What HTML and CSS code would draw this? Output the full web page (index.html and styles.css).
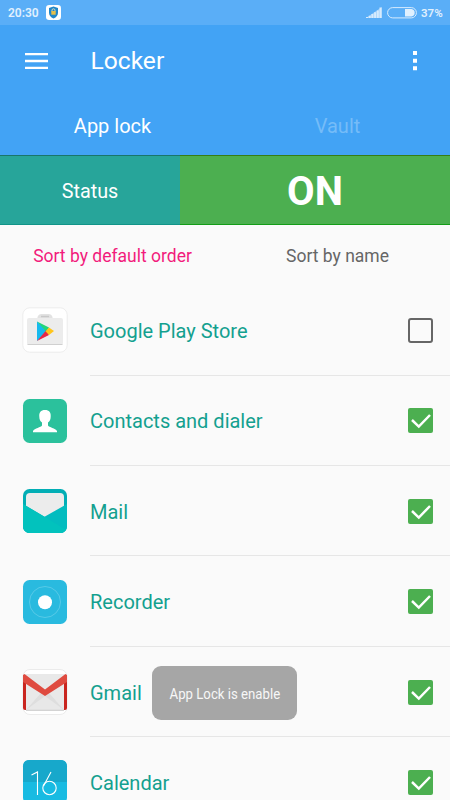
FILE: index.html
```html
<!DOCTYPE html>
<html lang="en">
<head>
<meta charset="utf-8">
<title>Locker</title>
<link rel="stylesheet" href="styles.css">
</head>
<body>
<div class="screen">
  <div class="statusbar">
    <span class="time">20:30</span>
    <svg class="shield" viewBox="0 0 15 15"><rect width="15" height="15" rx="3.2" fill="#fff"/><path d="M7.500 1.500 12 3v4.500q0 4-4.500 6-4.500-2-4.500-6V3z" fill="#1f86c9"/><path d="M6 6.500V5.300a1.500 1.500 0 0 1 3 0v1.200" fill="none" stroke="#e9dfb0"/><rect x="5.300" y="6" width="4.400" height="3.700" fill="#e6c04a"/></svg>
    <svg class="signal" viewBox="0 0 17 12"><path d="M0 11h2v-1H0zM2.700 11h2V8.700h-2zM5.400 11h2V7h-2zM8.100 11h2V5.200h-2zM10.800 11h2V3.500h-2zM13.500 11h2V0.500h-2z" fill="#d7ebfd"/><path d="M0 11 16 0v11z" fill="#d7ebfd" opacity=".55"/></svg>
    <svg class="battery" viewBox="0 0 30 12"><rect x=".6" y=".6" width="28.800" height="10.300" rx="5.100" fill="none" stroke="#d7ebfd"/><path d="M18 2h6.500a3.800 3.800 0 0 1 0 7.500H18z" fill="#e0f0fe"/></svg>
    <span class="percent">37%</span>
  </div>
  <header class="appbar">
    <svg class="menu" viewBox="0 0 23 16"><path d="M0 1.200h23M0 8h23M0 14.800h23" stroke="#fff" stroke-width="2.300"/></svg>
    <h1 class="title">Locker</h1>
    <svg class="more" viewBox="0 0 4 20"><path d="M0 0h4v4H0zM0 7.700h4v4H0zM0 15.300h4v4H0z" fill="#fff"/></svg>
  </header>
  <nav class="tabs"><span>App lock</span><span class="inactive">Vault</span></nav>
  <section class="lockstate"><div class="label">Status</div><div class="value">ON</div></section>
  <div class="sort"><span class="selected">Sort by default order</span><span>Sort by name</span></div>
  <main class="list">
    <div class="row">
      <svg class="icon" viewBox="0 0 44 44"><rect x="-.2" y="-.2" width="44.400" height="44.400" rx="7" fill="#fff" stroke="#e8e8e8" stroke-width=".8"/><path d="M14.500 11V9q1-3 4-3h7q3 0 4 3v2" fill="#e2e2e2"/><path d="M18 8.500h8" stroke="#c8c8c8" stroke-width="1.400"/><rect x="4" y="10" width="36" height="27" rx="2" fill="#ececec"/><path d="M4.500 36.500h35" stroke="#d0d0d0"/><path d="M14 13.500v19.500L24.500 23z" fill="#16b9ee"/><path d="M14 13.500 26 19.500 23.500 24z" fill="#22d57b"/><path d="M14 33 26 27 23.500 22z" fill="#e72845"/><path d="M26 19.500 31 23 26 27 22.500 23.200z" fill="#ffc51b"/></svg>
      <div class="body"><span class="name">Google Play Store</span><span class="check"></span></div>
    </div>
    <div class="row">
      <svg class="icon" viewBox="0 0 44 44"><rect width="44" height="44" rx="6.500" fill="#2bc19c"/><path d="M22 11c4.300 0 6 2.500 5.700 6.500 0 3-1 4.800-2.700 6v3c1 2 7.500 2.600 9 5.500v1.300H10V32c1.500-2.900 8-3.500 9-5.500v-3c-1.700-1.200-2.700-3-2.700-6C16 13.500 17.700 11 22 11z" fill="#fff"/></svg>
      <div class="body"><span class="name">Contacts and dialer</span><span class="check on"><svg viewBox="0 0 25 25"><path d="m4 12 6.800 6.600L22 7"/></svg></span></div>
    </div>
    <div class="row">
      <svg class="icon" viewBox="0 0 44 44"><defs><clipPath id="mail"><rect width="44" height="44" rx="6.500"/></clipPath></defs><g clip-path="url(#mail)"><path d="M0 0h44v44H0z" fill="#02aeb5"/><rect x="3" y="4" width="38" height="30" rx="4" fill="#ececec"/><path d="M0 15 21.500 27.800 44 15v29H0z" fill="#03bcbf"/><path d="M0 15 21.500 27.800 44 41.500V44H0z" fill="#02c2bd"/></g></svg>
      <div class="body"><span class="name">Mail</span><span class="check on"><svg viewBox="0 0 25 25"><path d="m4 12 6.800 6.600L22 7"/></svg></span></div>
    </div>
    <div class="row">
      <svg class="icon" viewBox="0 0 44 44"><rect width="44" height="44" rx="6.500" fill="#29badf"/><circle cx="22" cy="22" r="15.500" fill="none" stroke="#62cde9" stroke-width=".8"/><circle cx="22" cy="22.300" r="7" fill="#fff"/></svg>
      <div class="body"><span class="name">Recorder</span><span class="check on"><svg viewBox="0 0 25 25"><path d="m4 12 6.800 6.600L22 7"/></svg></span></div>
    </div>
    <div class="row">
      <svg class="icon" viewBox="0 0 44 44"><rect x="0" y="-.5" width="44" height="45" rx="7" fill="#fff" stroke="#e6e6e6" stroke-width=".8"/><path d="M2 4h40v36H2z" fill="#e9e9e9"/><path d="M3 40 18 23l4 3 4-3 15 17z" fill="#dedede"/><path d="M3 40 22 26 41 40z" fill="#e8e8e8"/><path d="M3 40.300h38" stroke="#c9c9c9"/><path d="M0 7h3v33H2q-2 0-2-2zM41 7h3v31q0 2-2 2h-1z" fill="#c9251f"/><path d="M0 5 1.500 4 22 19.500 42.500 4 44 5v7L22 26 0 12z" fill="#df4b40"/></svg>
      <div class="body"><span class="name">Gmail</span><span class="check on"><svg viewBox="0 0 25 25"><path d="m4 12 6.800 6.600L22 7"/></svg></span></div>
    </div>
    <div class="row">
      <svg class="icon" viewBox="0 0 44 44"><rect width="44" height="44" rx="6.500" fill="#18bbe2"/><path d="M0 22V6.500Q0 0 6.500 0h31Q44 0 44 6.500V22z" fill="#17a8cb"/><path d="m8.500 15 6-3v23M28 12 20.500 26" fill="none" stroke="#fff" stroke-width="1.100"/><circle cx="26.500" cy="28" r="6.700" fill="none" stroke="#fff" stroke-width="1.100"/></svg>
      <div class="body"><span class="name">Calendar</span><span class="check on"><svg viewBox="0 0 25 25"><path d="m4 12 6.800 6.600L22 7"/></svg></span></div>
    </div>
  </main>
  <div class="toast"><span>App Lock is enable</span></div>
</div>
</body>
</html>
```
FILE: styles.css
```css
* { box-sizing: border-box; }
body { margin: 0; font-family: Roboto, "Liberation Sans", sans-serif; background: #fafafa; }
.screen { position: relative; width: 450px; height: 800px; overflow: hidden; background: #fafafa; }
svg { display: block; flex: none; }
.statusbar { display: flex; align-items: center; height: 25px; padding: 0 7px 0 8px; background: #5aaef7; color: #e0f0fe; font-size: 12px; font-weight: 600; }
.time { width: 38px; }
.shield { width: 15px; height: 15px; }
.signal { width: 17px; height: 12px; margin-left: auto; }
.battery { width: 30px; height: 12px; margin: 0 4px 0 4px; }
.percent { width: 22px; font-size: 11.500px; white-space: nowrap; }
.appbar { display: flex; align-items: center; height: 71px; padding: 0 33px 0 25px; background: #42a3f5; color: #fff; }
.menu { width: 23px; height: 16px; }
.title { margin: 0 0 0 42.500px; font-size: 24.600px; font-weight: 400; }
.more { width: 4px; height: 20px; margin-left: auto; }
.tabs { display: grid; grid-template-columns: 1fr 1fr; height: 59px; align-items: center; text-align: center; background: #42a3f5; color: #fff; font-size: 20px; }
.inactive { color: #75bcf8; }
.lockstate { display: flex; height: 70px; color: #fff; }
.label, .value { display: flex; align-items: center; justify-content: center; }
.label { width: 180px; background: #27a59a; border-top: 1px solid #1a766b; border-bottom: 1px solid #119488; font-size: 19.800px; padding-top: 2px; }
.value { flex: 1; background: #4caf50; border-top: 1px solid #377d16; border-bottom: 1px solid #139d17; font-size: 40px; font-weight: 700; padding-top: 3px; }
.sort { display: grid; grid-template-columns: 1fr 1fr; height: 60.300px; padding-top: 2px; align-items: center; text-align: center; font-size: 17.500px; color: #666; }
.selected { color: #f21c7c; }
.row { display: flex; align-items: center; height: 90.400px; padding-left: 23px; }
.icon { width: 44px; height: 44px; overflow: visible; }
.body { flex: 1; display: flex; align-items: center; justify-content: space-between; align-self: stretch; margin-left: 23px; padding: 1px 17.500px 0 0; border-bottom: 1px solid #e6e6e6; }
.name { padding-top: 1px; font-size: 20px; color: #13a08f; }
.check { width: 25px; height: 25px; border: 2px solid #666; border-radius: 3px; }
.check.on { border: 0; background: #4caf50; border-radius: 2px; }
.check path { fill: none; stroke: #fff; stroke-width: 2.500; }
.toast { position: absolute; left: 152px; top: 666px; width: 145px; height: 54px; display: flex; align-items: center; justify-content: center; padding-top: 1px; border-radius: 9px; background: #a6a6a6; color: #f7f7f7; font-size: 15px; white-space: nowrap; }
.toast span { transform: scaleX(.88); }
```
